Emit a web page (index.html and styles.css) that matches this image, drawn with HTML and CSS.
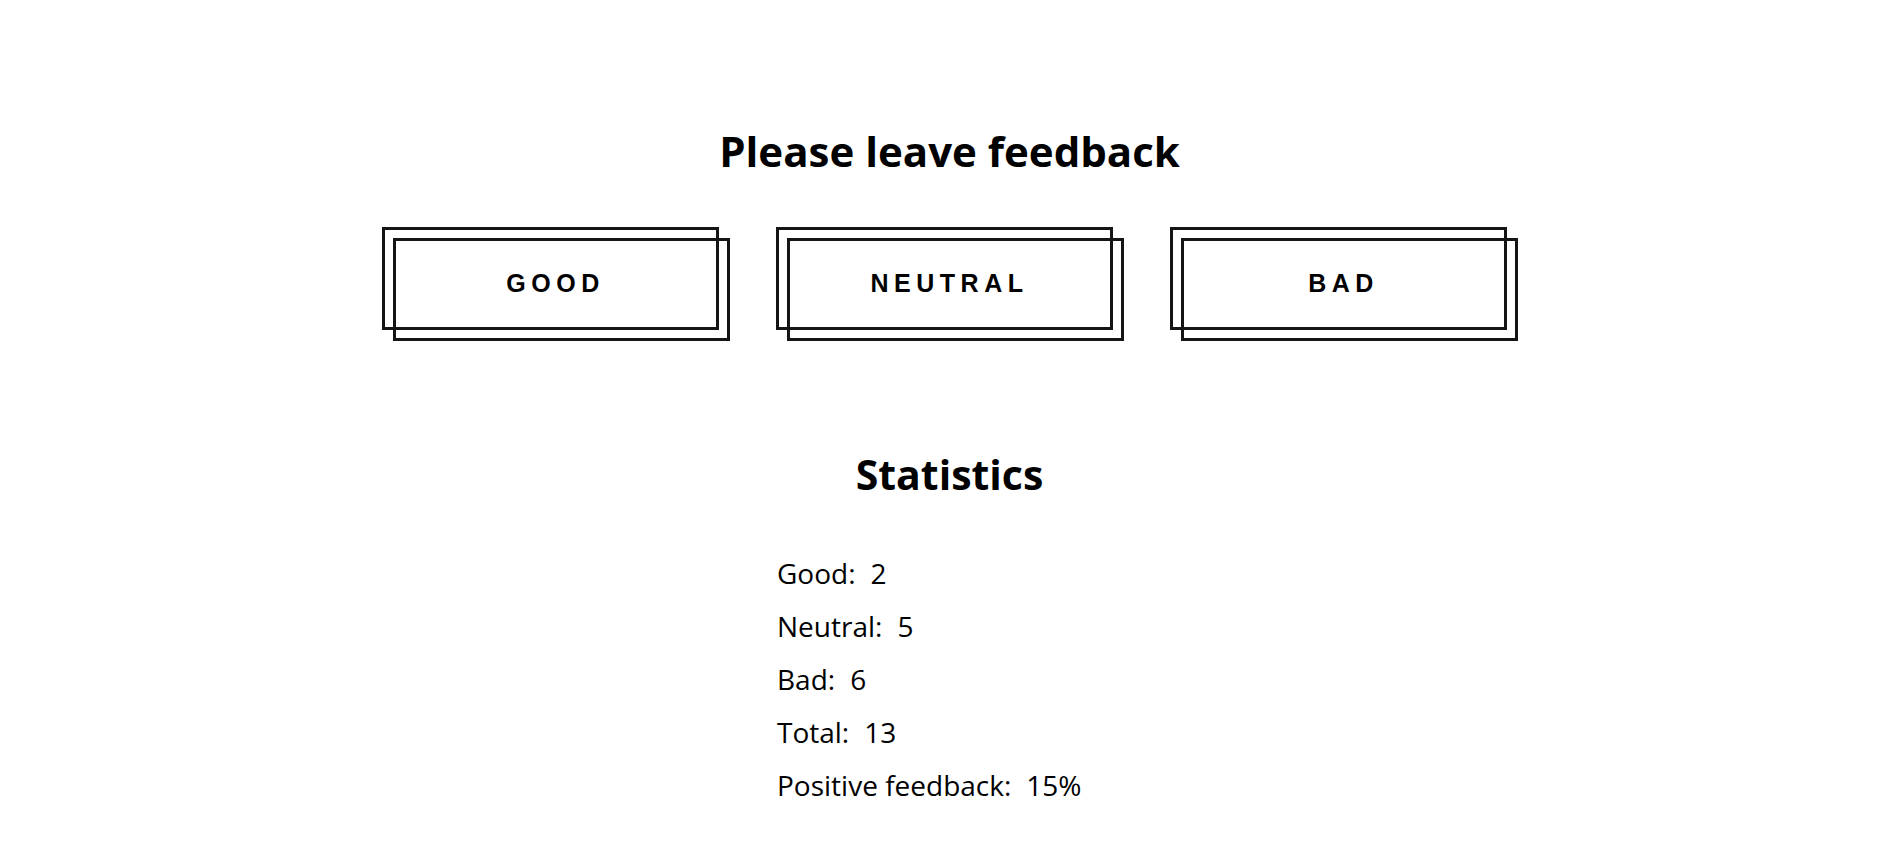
FILE: index.html
```html
<!DOCTYPE html>
<html lang="en">
<head>
<meta charset="utf-8">
<title>Feedback</title>
<link rel="stylesheet" href="styles.css">
</head>
<body>
<main class="app">
  <section class="feedback">
    <h1 class="title title-main">Please leave feedback</h1>
    <div class="options">
      <button class="btn" type="button"><span class="btn-label">Good</span></button>
      <button class="btn" type="button"><span class="btn-label">Neutral</span></button>
      <button class="btn" type="button"><span class="btn-label">Bad</span></button>
    </div>
  </section>
  <section class="stats">
    <h2 class="title title-stats">Statistics</h2>
    <ul class="stats-list">
      <li class="stat"><span class="stat-label">Good:</span><span class="stat-value">2</span></li>
      <li class="stat"><span class="stat-label">Neutral:</span><span class="stat-value">5</span></li>
      <li class="stat"><span class="stat-label">Bad:</span><span class="stat-value">6</span></li>
      <li class="stat"><span class="stat-label">Total:</span><span class="stat-value">13</span></li>
      <li class="stat"><span class="stat-label">Positive feedback:</span><span class="stat-value">15%</span></li>
    </ul>
  </section>
</main>
</body>
</html>
```

FILE: styles.css
```css
*,
*::before,
*::after {
  box-sizing: border-box;
}

html, body {
  margin: 0;
  padding: 0;
  background: #fff;
  color: #000;
}

body {
  font-family: "Open Sans", "Noto Sans", sans-serif;
}

.app {
  display: flex;
  flex-direction: column;
  align-items: center;
  padding-top: 126px;
}

.feedback {
  display: flex;
  flex-direction: column;
  align-items: center;
}

.title {
  margin: 0;
  font-weight: 700;
  line-height: 1.2;
  text-align: center;
}

.title-main {
  font-size: 42px;
}

.title-stats {
  font-size: 41px;
}

.options {
  display: flex;
  gap: 46px;
  margin-top: 51px;
}

.btn {
  position: relative;
  width: 348px;
  height: 114px;
  padding: 0 0 2px;
  margin: 0;
  border: none;
  background: transparent;
  display: flex;
  align-items: center;
  justify-content: center;
  cursor: pointer;
  font-family: "Liberation Sans", Arial, sans-serif;
  font-weight: 700;
  font-size: 25px;
  letter-spacing: 5.5px;
  text-transform: uppercase;
  color: #000;
}

.btn::before,
.btn::after {
  content: "";
  position: absolute;
  width: 337px;
  height: 103px;
  border: 3px solid #151515;
}

.btn::before {
  top: 0;
  left: 0;
}

.btn::after {
  top: 11px;
  left: 11px;
}

.btn-label {
  position: relative;
  z-index: 1;
}

.stats {
  display: flex;
  flex-direction: column;
  align-items: center;
  margin-top: 109px;
}

.stats-list {
  list-style: none;
  margin: 57px 0 0;
  padding: 0;
  width: 345px;
  display: flex;
  flex-direction: column;
  gap: 20px;
}

.stat {
  display: flex;
  gap: 15px;
  font-size: 28px;
  line-height: 33px;
}
```
